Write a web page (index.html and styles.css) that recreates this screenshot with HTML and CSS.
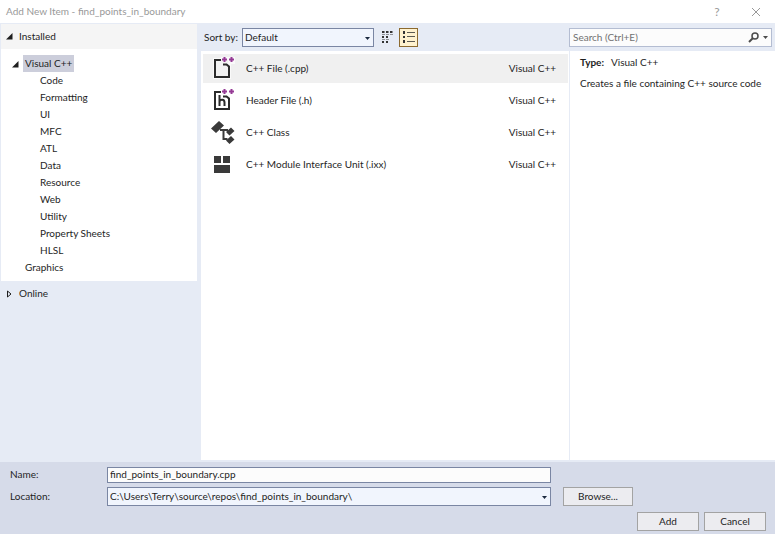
FILE: index.html
```html
<!DOCTYPE html>
<html lang="en">
<head>
    <meta charset="UTF-8">
    <meta name="viewport" content="width=device-width, initial-scale=1.0">
    <title>Add New Item - find_points_in_boundary</title>
    <link rel="stylesheet" href="styles.css">
</head>
<body>
    <header class="titlebar">
        <h1>Add New Item - find_points_in_boundary</h1>
        <button class="title-button" type="button" aria-label="Help">?</button>
        <button class="title-button" type="button" aria-label="Close">
            <svg width="10" height="10" viewBox="0 0 10 10"><path d="M1 1l8 8M9 1l-8 8" stroke="#999" fill="none"/></svg>
        </button>
    </header>

    <main class="main">
        <nav class="sidebar">
            <section class="panel">
                <h2 class="panel-title">
                    <svg class="arrow" width="7" height="7" viewBox="0 0 7 7"><path d="M6.500 0v6.500H0z" fill="#1e1e1e"/></svg>
                    Installed
                </h2>
                <ul class="tree">
                    <li>
                        <svg class="arrow" width="7" height="7" viewBox="0 0 7 7"><path d="M6.500 0v6.500H0z" fill="#1e1e1e"/></svg>
                        <a class="selected" href="#">Visual C++</a>
                        <ul>
                            <li><a href="#">Code</a></li>
                            <li><a href="#">Formatting</a></li>
                            <li><a href="#">UI</a></li>
                            <li><a href="#">MFC</a></li>
                            <li><a href="#">ATL</a></li>
                            <li><a href="#">Data</a></li>
                            <li><a href="#">Resource</a></li>
                            <li><a href="#">Web</a></li>
                            <li><a href="#">Utility</a></li>
                            <li><a href="#">Property Sheets</a></li>
                            <li><a href="#">HLSL</a></li>
                        </ul>
                    </li>
                    <li><a href="#">Graphics</a></li>
                </ul>
            </section>
            <h2 class="panel-title online">
                <svg class="arrow" width="7" height="8" viewBox="0 0 7 8"><path d="M1.500 1v6L5 4z" stroke="#1e1e1e" fill="none"/></svg>
                Online
            </h2>
        </nav>

        <div class="content">
            <div class="toolbar">
                <label for="sort">Sort by:</label>
                <div class="select sort">
                    <select id="sort"><option>Default</option></select>
                    <svg width="5" height="3" viewBox="0 0 5 3"><path d="M0 0h5L2.500 3z" fill="#1b293e"/></svg>
                </div>
                <button class="view-button" type="button" aria-label="Small icons">
                    <svg width="12" height="12" viewBox="0 0 12 12" fill="#333">
                        <path d="M0 0h2v2H0zM4 0h2v2H4zM8 0h2v2H8zM0 5h2v2H0zM4 5h2v2H4zM0 10h2v2H0zM4 10h2v2H4z"/>
                        <path d="M2 0h1v2H2zM6 0h1v2H6zM10 0h1v2h-1zM0 3h3v1H0zM4 3h3v1H4zM8 3h3v1H8zM0 8h3v1H0zM4 8h3v1H4z" opacity=".5"/>
                    </svg>
                </button>
                <button class="view-button active" type="button" aria-label="Medium icons">
                    <svg width="12" height="12" viewBox="0 0 12 12" fill="#333"><path d="M0 0h2v3H0zM0 5h2v2H0zM0 9h2v3H0z"/><path d="M4 1h8v1H4zM4 5h8v1H4zM4 10h8v1H4z" opacity=".8"/></svg>
                </button>
                <div class="search">
                    <input type="search" placeholder="Search (Ctrl+E)" aria-label="Search">
                    <svg width="11" height="11" viewBox="0 0 11 11"><circle cx="7" cy="4" r="3" stroke="#4c4c4c" stroke-width="1.500" fill="none"/><path d="M5 6L1 10" stroke="#4c4c4c" stroke-width="2"/></svg>
                    <svg width="5" height="3" viewBox="0 0 5 3"><path d="M0 0h5L2.500 3z" fill="#4c4c4c"/></svg>
                </div>
            </div>

            <div class="panes">
                <ul class="items">
                    <li class="item current">
                        <svg width="24" height="24" viewBox="0 0 24 24">
                            <path d="M2 1h18v21H2zM10 0h14v7H10z" fill="#fafafa"/>
                            <path d="M4 3h13v17H4z" fill="#f2f2f2"/>
                            <path d="M10 3H4v17h14V9.500L15.500 7.500H12" stroke="#2b2b2b" stroke-width="2" fill="none"/>
                            <path d="M13.500 0v5M11 2.500h5M20.500 0v5M18 2.500h5" stroke="#953a95" stroke-width="2"/>
                        </svg>
                        <span class="name">C++ File (.cpp)</span>
                        <span>Visual C++</span>
                    </li>
                    <li class="item">
                        <svg width="24" height="24" viewBox="0 0 24 24">
                            <path d="M10 3H4v17h14V9.500L15.500 7.500H12" stroke="#2b2b2b" stroke-width="2" fill="none"/>
                            <path d="M8.500 6v11M8.500 12.500c1-2.500 5-2.500 5 1V17" stroke="#2b2b2b" stroke-width="2" fill="none"/>
                            <path d="M13.500 0v5M11 2.500h5M20.500 0v5M18 2.500h5" stroke="#953a95" stroke-width="2"/>
                        </svg>
                        <span class="name">Header File (.h)</span>
                        <span>Visual C++</span>
                    </li>
                    <li class="item">
                        <svg width="24" height="24" viewBox="0 0 24 24" fill="#3a3a3a">
                            <path d="M0 7.500L8 0l5 4.500L5 12zM15 11L20 6.500l3.500 3.500L18.500 14.500zM15 19.500L20 15l3.500 3.500L18.500 23z"/>
                            <path d="M9 9h8M12.500 9v9h4" stroke="#3a3a3a" stroke-width="2" fill="none"/>
                        </svg>
                        <span class="name">C++ Class</span>
                        <span>Visual C++</span>
                    </li>
                    <li class="item">
                        <svg width="24" height="24" viewBox="0 0 24 24" fill="#3a3a3a"><path d="M3 3h7v7H3zM12 3h7v7h-7zM3 12h16v8H3z"/></svg>
                        <span class="name">C++ Module Interface Unit (.ixx)</span>
                        <span>Visual C++</span>
                    </li>
                </ul>
                <aside class="details">
                    <p><b>Type:</b>Visual C++</p>
                    <p>Creates a file containing C++ source code</p>
                </aside>
            </div>
        </div>
    </main>

    <form class="footer">
        <div class="fields">
            <label for="name">Name:</label>
            <input id="name" type="text" value="find_points_in_boundary.cpp">
            <label class="location-label" for="location">Location:</label>
            <div class="select">
                <select id="location"><option>C:\Users\Terry\source\repos\find_points_in_boundary\</option></select>
                <svg width="5" height="3" viewBox="0 0 5 3"><path d="M0 0h5L2.500 3z" fill="#1b293e"/></svg>
            </div>
            <button class="browse" type="button">Browse...</button>
        </div>
        <div class="actions">
            <button type="button">Add</button>
            <button type="button">Cancel</button>
        </div>
    </form>
</body>
</html>
```
FILE: styles.css
```css
* {
    box-sizing: border-box;
}

body {
    margin: 0;
    min-height: 100vh;
    display: flex;
    flex-direction: column;
    font-family: Lato, "Open Sans", sans-serif;
    font-size: 10px;
    line-height: 17px;
    color: #1e1e1e;
    background-color: #e6ebf5;
}

h1, h2, p, ul {
    margin: 0;
    padding: 0;
    font-size: inherit;
    font-weight: normal;
    list-style: none;
}

a {
    color: inherit;
    text-decoration: none;
}

svg {
    display: block;
    flex-shrink: 0;
}

button, input, select {
    margin: 0;
    padding: 0;
    font: inherit;
    color: inherit;
}

.titlebar {
    display: flex;
    align-items: center;
    height: 23px;
    padding: 0 13px 0 6px;
    background-color: white;
    color: #999;
}

.titlebar h1 {
    flex: 1;
}

.title-button {
    display: flex;
    justify-content: center;
    width: 12px;
    margin-left: 27px;
    border: none;
    background: none;
    font-size: 12px;
}

.main {
    flex: 1;
    display: flex;
}

.sidebar {
    width: 201px;
    padding: 1px 4px 0 1px;
}

.panel {
    background-color: white;
    padding-bottom: 5px;
}

.panel-title {
    display: flex;
    align-items: center;
    gap: 6px;
    height: 25px;
    padding-left: 5px;
}

.panel .panel-title {
    background-color: #f5f5f5;
}

.tree {
    padding: 6px 0 0 22px;
}

.tree li {
    position: relative;
}

.tree .arrow {
    position: absolute;
    left: -11px;
    top: 6px;
}

.tree a {
    display: block;
    width: max-content;
    padding: 0 2px;
}

.tree ul {
    padding-left: 15px;
}

.tree .selected {
    background-color: #cccedb;
}

.content {
    flex: 1;
    display: flex;
    flex-direction: column;
}

.toolbar {
    display: flex;
    align-items: center;
    height: 28px;
    padding: 0 3px;
}

.toolbar label {
    width: 38px;
}

.select {
    position: relative;
}

.select select {
    display: block;
    width: 100%;
    height: 19px;
    padding: 0 14px 0 2px;
    appearance: none;
    border: 1px solid #7a86a3;
    border-radius: 0;
    background-color: #f1f5fd;
}

.select svg {
    position: absolute;
    right: 4px;
    top: 9px;
    pointer-events: none;
}

.sort {
    width: 132px;
}

.view-button {
    display: flex;
    align-items: center;
    justify-content: center;
    width: 19px;
    height: 19px;
    margin-left: 4px;
    border: none;
    background: none;
}

.view-button.active {
    margin-left: 2px;
    border: 1px solid #8c6a2f;
    background-color: #fff2cf;
}

.search {
    display: flex;
    align-items: center;
    gap: 4px;
    width: 203px;
    height: 19px;
    margin-left: auto;
    padding: 0 3px;
    border: 1px solid #b4bdd2;
    background-color: #fcfcfc;
}

.search input {
    flex: 1;
    min-width: 0;
    border: none;
    outline: none;
    background: none;
}

.search input::placeholder {
    color: #717171;
}

.panes {
    flex: 1;
    display: flex;
    margin-bottom: 2px;
    background-color: white;
}

.items {
    flex: 1;
    padding: 3px 1px 0 2px;
}

.item {
    display: flex;
    align-items: center;
    height: 29px;
    margin-bottom: 3px;
    padding: 0 12px 0 8px;
}

.item.current {
    background-color: #f0f0f0;
}

.item .name {
    flex: 1;
    padding-left: 11px;
}

.details {
    width: 206px;
    padding: 3px 8px 0 10px;
    border-left: 1px solid #e6ebf5;
}

.details p {
    margin-bottom: 4px;
}

.details b {
    margin-right: 7px;
}

.footer {
    padding: 4px 9px 3px;
    background-color: #d6dbe9;
}

.fields {
    display: grid;
    grid-template-columns: 98px 1fr 70px;
    row-gap: 4px;
    align-items: center;
    margin-right: 133px;
}

.fields label {
    padding-left: 1px;
}

.fields input {
    height: 16px;
    padding: 0 2px;
    border: 1px solid #7a86a3;
    background-color: #fcfcfc;
}

.fields input,
.fields .select {
    margin-right: 12px;
}

.fields .location-label {
    grid-column: 1;
}

.actions {
    display: flex;
    justify-content: flex-end;
    gap: 5px;
    margin-top: 6px;
}

.footer button {
    height: 19px;
    border: 1px solid #a3a3a3;
    background-color: #ececf0;
}

.actions button {
    width: 62px;
}
```
